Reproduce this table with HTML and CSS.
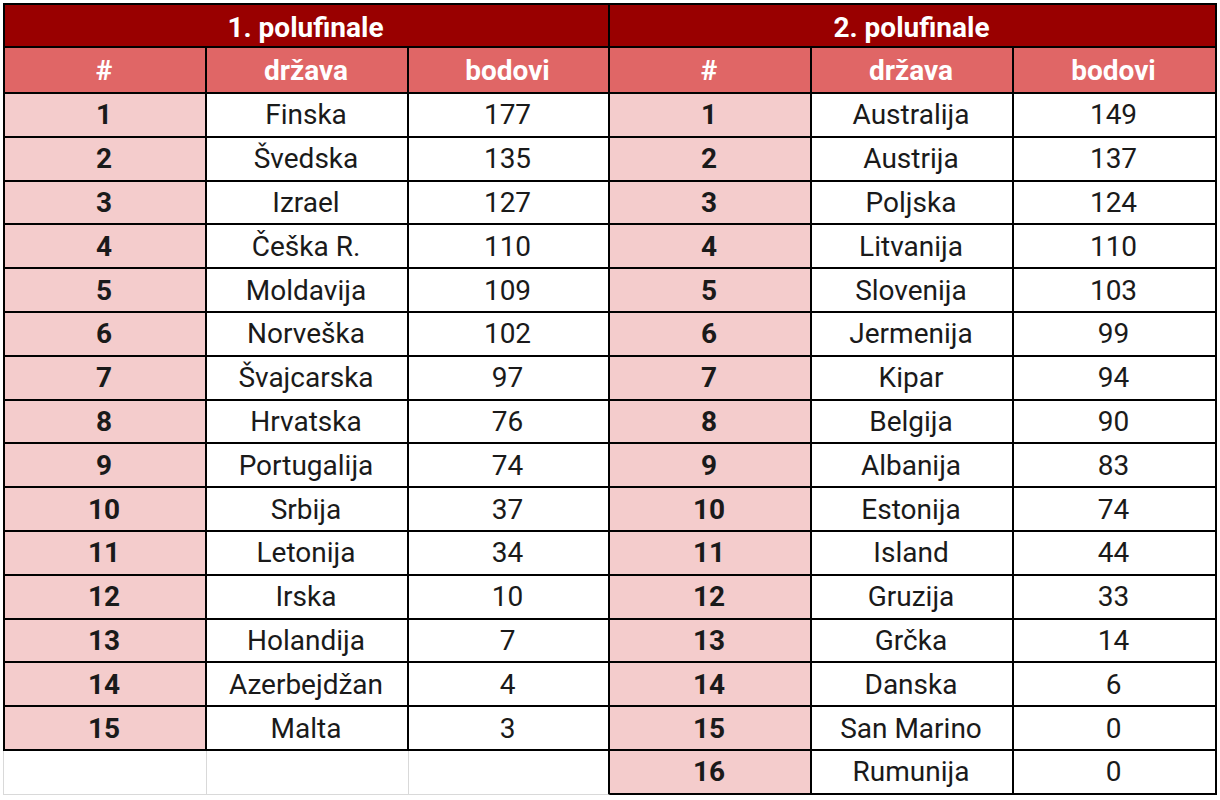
FILE: index.html
```html
<!DOCTYPE html>
<html lang="hr">
<head>
<meta charset="utf-8">
<title>Polufinale</title>
<link rel="stylesheet" href="styles.css">
</head>
<body>
<div class="page">
  <div class="sheet">
    <div class="cell title top first span3">1. polufinale</div>
    <div class="cell title top span3">2. polufinale</div>

    <div class="cell head first">#</div><div class="cell head">država</div><div class="cell head">bodovi</div>
    <div class="cell head">#</div><div class="cell head">država</div><div class="cell head">bodovi</div>

    <div class="cell num first">1</div><div class="cell">Finska</div><div class="cell">177</div>
    <div class="cell num">1</div><div class="cell">Australija</div><div class="cell">149</div>

    <div class="cell num first">2</div><div class="cell">Švedska</div><div class="cell">135</div>
    <div class="cell num">2</div><div class="cell">Austrija</div><div class="cell">137</div>

    <div class="cell num first">3</div><div class="cell">Izrael</div><div class="cell">127</div>
    <div class="cell num">3</div><div class="cell">Poljska</div><div class="cell">124</div>

    <div class="cell num first">4</div><div class="cell">Češka R.</div><div class="cell">110</div>
    <div class="cell num">4</div><div class="cell">Litvanija</div><div class="cell">110</div>

    <div class="cell num first">5</div><div class="cell">Moldavija</div><div class="cell">109</div>
    <div class="cell num">5</div><div class="cell">Slovenija</div><div class="cell">103</div>

    <div class="cell num first">6</div><div class="cell">Norveška</div><div class="cell">102</div>
    <div class="cell num">6</div><div class="cell">Jermenija</div><div class="cell">99</div>

    <div class="cell num first">7</div><div class="cell">Švajcarska</div><div class="cell">97</div>
    <div class="cell num">7</div><div class="cell">Kipar</div><div class="cell">94</div>

    <div class="cell num first">8</div><div class="cell">Hrvatska</div><div class="cell">76</div>
    <div class="cell num">8</div><div class="cell">Belgija</div><div class="cell">90</div>

    <div class="cell num first">9</div><div class="cell">Portugalija</div><div class="cell">74</div>
    <div class="cell num">9</div><div class="cell">Albanija</div><div class="cell">83</div>

    <div class="cell num first">10</div><div class="cell">Srbija</div><div class="cell">37</div>
    <div class="cell num">10</div><div class="cell">Estonija</div><div class="cell">74</div>

    <div class="cell num first">11</div><div class="cell">Letonija</div><div class="cell">34</div>
    <div class="cell num">11</div><div class="cell">Island</div><div class="cell">44</div>

    <div class="cell num first">12</div><div class="cell">Irska</div><div class="cell">10</div>
    <div class="cell num">12</div><div class="cell">Gruzija</div><div class="cell">33</div>

    <div class="cell num first">13</div><div class="cell">Holandija</div><div class="cell">7</div>
    <div class="cell num">13</div><div class="cell">Grčka</div><div class="cell">14</div>

    <div class="cell num first">14</div><div class="cell">Azerbejdžan</div><div class="cell">4</div>
    <div class="cell num">14</div><div class="cell">Danska</div><div class="cell">6</div>

    <div class="cell num first">15</div><div class="cell">Malta</div><div class="cell">3</div>
    <div class="cell num">15</div><div class="cell">San Marino</div><div class="cell">0</div>

    <div class="cell empty efirst"></div><div class="cell empty"></div><div class="cell empty elast"></div>
    <div class="cell num">16</div><div class="cell">Rumunija</div><div class="cell">0</div>
  </div>
</div>
</body>
</html>
```

FILE: styles.css
```css
html, body {
  margin: 0;
  padding: 0;
  background: #ffffff;
}

.page {
  padding: 3px 0 0 3px;
}

.sheet {
  display: grid;
  grid-template-columns: 204px 202px 201px 202px 202px 203px;
  grid-template-rows: 45px 46px repeat(16, 43.8px);
  font-family: Roboto, "Liberation Sans", sans-serif;
  font-size: 28px;
  color: #1a1a1a;
}

.cell {
  box-sizing: border-box;
  display: flex;
  align-items: center;
  justify-content: center;
  background: #ffffff;
  border-right: 2px solid #000;
  border-bottom: 2px solid #000;
  padding-top: 0;
  padding-right: 2px;
  white-space: nowrap;
}

.first {
  border-left: 2px solid #000;
}

.top {
  border-top: 2px solid #000;
  padding-top: 3px;
}

.span3 {
  grid-column: span 3;
}

.title {
  background: #990000;
  color: #ffffff;
  font-weight: 700;
}

.head {
  background: #e06666;
  color: #ffffff;
  font-weight: 700;
}

.num {
  background: #f4cccc;
  font-weight: 700;
}

.empty {
  border-right: 1px solid #d9d9d9;
  border-bottom: 1px solid #d9d9d9;
}

.efirst {
  border-left: 1px solid #d9d9d9;
}

.elast {
  border-right: 2px solid #000;
}
```
